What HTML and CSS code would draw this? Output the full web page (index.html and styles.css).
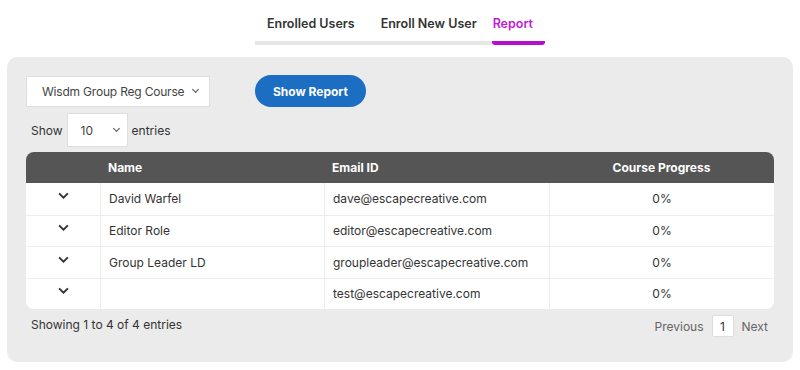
FILE: index.html
```html
<!DOCTYPE html>
<html lang="en">
<head>
  <meta charset="UTF-8">
  <title>Report</title>
  <link rel="stylesheet" href="styles.css">
</head>
<body>
  <div class="tabs">
    <div class="tab first">Enrolled Users</div>
    <div class="tab middle">Enroll New User</div>
    <div class="tab active">Report</div>
  </div>

  <div class="panel">
    <div class="controls">
      <div class="select course">Wisdm Group Reg Course <span class="caret"></span></div>
      <button class="btn">Show Report</button>
    </div>

    <div class="length">
      Show
      <div class="select count">10 <span class="caret"></span></div>
      entries
    </div>

    <table class="report">
      <thead>
        <tr>
          <th class="toggle"></th>
          <th>Name</th>
          <th>Email ID</th>
          <th class="center">Course Progress</th>
        </tr>
      </thead>
      <tbody>
        <tr>
          <td class="toggle"><svg class="chev" viewBox="0 0 10 6"><path d="M1 1l4 4 4-4"/></svg></td>
          <td>David Warfel</td>
          <td>dave@escapecreative.com</td>
          <td class="center">0%</td>
        </tr>
        <tr>
          <td class="toggle"><svg class="chev" viewBox="0 0 10 6"><path d="M1 1l4 4 4-4"/></svg></td>
          <td>Editor Role</td>
          <td>editor@escapecreative.com</td>
          <td class="center">0%</td>
        </tr>
        <tr>
          <td class="toggle"><svg class="chev" viewBox="0 0 10 6"><path d="M1 1l4 4 4-4"/></svg></td>
          <td>Group Leader LD</td>
          <td>groupleader@escapecreative.com</td>
          <td class="center">0%</td>
        </tr>
        <tr>
          <td class="toggle"><svg class="chev" viewBox="0 0 10 6"><path d="M1 1l4 4 4-4"/></svg></td>
          <td></td>
          <td>test@escapecreative.com</td>
          <td class="center">0%</td>
        </tr>
      </tbody>
    </table>

    <div class="footer">
      <div class="info">Showing 1 to 4 of 4 entries</div>
      <div class="pager">
        <span>Previous</span>
        <span class="page">1</span>
        <span>Next</span>
      </div>
    </div>
  </div>
</body>
</html>
```

FILE: styles.css
```css
body {
  font-family: Inter, "Noto Sans", sans-serif;
  font-size: 12px;
  color: #333;
  background: white;
  margin: 0;
  padding: 0 7px;
}
.tabs {
  display: flex;
  justify-content: center;
  padding-top: 16px;
}
.tab {
  font-weight: 600;
  font-size: 12.5px;
  color: #333;
  padding: 0 13px 10px;
  border-bottom: 4px solid #e6e6e6;
}
.tab.first {
  padding-left: 12px;
}
.tab.middle {
  padding-right: 15px;
}
.tab.active {
  color: #c21bd8;
  border-bottom-color: #b80cd2;
  border-radius: 3px;
  padding: 0 12px 10px 1px;
}
.panel {
  background: #ebebeb;
  border-radius: 10px;
  margin-top: 12px;
  padding: 18px 19px 24px;
  height: 263px;
}
.controls {
  display: flex;
  align-items: center;
  gap: 45px;
}
.select {
  background: white;
  border: 1px solid #dedede;
  display: flex;
  align-items: center;
  justify-content: space-between;
  box-sizing: border-box;
  color: #444;
  white-space: nowrap;
}
.course {
  width: 184px;
  height: 31px;
  padding: 0 11px 0 15px;
  letter-spacing: -0.2px;
}
.caret {
  width: 4px;
  height: 4px;
  border-right: 1.5px solid #555;
  border-bottom: 1.5px solid #555;
  transform: rotate(45deg);
  margin-top: -3px;
}
.btn {
  background: #1b6ec2;
  color: white;
  border: none;
  border-radius: 16px;
  font-family: inherit;
  font-size: 12px;
  font-weight: 700;
  height: 32px;
  padding: 0 18px;
}
.length {
  display: flex;
  align-items: center;
  gap: 4px;
  margin-top: 6px;
  padding-left: 5px;
}
.count {
  width: 61px;
  height: 34px;
  padding: 0 8px 0 13px;
}
.report {
  width: 100%;
  table-layout: fixed;
  margin-top: 5px;
  border-collapse: separate;
  border-spacing: 0;
  background: white;
  border-radius: 8px;
  overflow: hidden;
}
.report th,
.report td {
  box-sizing: border-box;
}
.report th {
  background: #555;
  color: white;
  font-weight: 700;
  text-align: left;
  height: 31px;
  padding: 0 8px;
}
.report td {
  height: 31.5px;
  padding: 0 8px;
  border-top: 1px solid #ececec;
}
.report tbody tr:first-child td {
  border-top: none;
}
.report td + td {
  border-left: 1px solid #ececec;
}
.report th:nth-child(1) { width: 74px; }
.report th:nth-child(2) { width: 224px; }
.report th:nth-child(3) { width: 225px; }
.report th.center,
.center {
  text-align: center;
}
.toggle {
  text-align: center;
}
.chev {
  width: 11px;
  height: 7px;
  fill: none;
  stroke: #333;
  stroke-width: 1.7;
  vertical-align: middle;
  margin-top: -8px;
}
.footer {
  display: flex;
  justify-content: space-between;
  align-items: flex-start;
  margin-top: 6px;
  padding-left: 5px;
}
.info {
  padding-top: 2px;
}
.pager {
  display: flex;
  align-items: center;
  gap: 8px;
  color: #666;
  padding-right: 6px;
}
.page {
  background: white;
  border: 1px solid #ddd;
  border-radius: 2px;
  color: #333;
  width: 22px;
  height: 22px;
  box-sizing: border-box;
  display: flex;
  align-items: center;
  justify-content: center;
}
```
